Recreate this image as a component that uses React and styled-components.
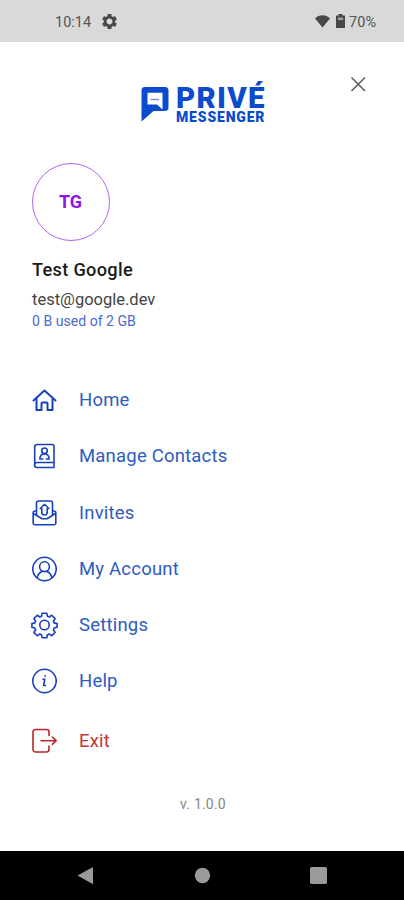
import React from 'react';
import styled, { createGlobalStyle } from 'styled-components';

const GlobalStyle = createGlobalStyle`
  * {
    box-sizing: border-box;
  }
  body {
    margin: 0;
    background: #fff;
    font-family: Roboto, 'Liberation Sans', sans-serif;
  }
`;

const Screen = styled.div`
  width: 404px;
  height: 900px;
  display: flex;
  flex-direction: column;
  background: #fff;
  overflow: hidden;
`;

const StatusBar = styled.header`
  height: 42px;
  flex-shrink: 0;
  display: flex;
  justify-content: space-between;
  align-items: center;
  padding: 2px 28px 0 55px;
  background: #d9d9d9;
  color: #555;
  font-size: 14.5px;
`;

const StatusGroup = styled.div`
  display: flex;
  align-items: center;
  gap: ${({ $gap }) => $gap}px;
  svg {
    display: block;
    margin-top: -2px;
  }
`;

const Drawer = styled.main`
  flex: 1;
  display: flex;
  flex-direction: column;
  padding: 0 32px;
`;

const TopRow = styled.div`
  display: grid;
  grid-template-columns: 1fr auto 1fr;
  height: 121px;
  padding-top: 33px;
`;

const Logo = styled.svg`
  grid-column: 2;
  display: block;
  overflow: visible;
  text {
    font-family: Roboto, sans-serif;
    font-weight: 900;
    fill: #0c4bcb;
  }
`;

const CloseButton = styled.button`
  justify-self: end;
  width: 20px;
  height: 20px;
  margin: -1px 4px 0 0;
  padding: 0;
  border: 0;
  background: none;
  svg {
    display: block;
  }
`;

const Avatar = styled.div`
  width: 78px;
  height: 78px;
  display: flex;
  align-items: center;
  justify-content: center;
  padding: 0 1px 1px 0;
  border: 1px solid #b264f2;
  border-radius: 50%;
  color: #9213ea;
  font-size: 18px;
  font-weight: 700;
`;

const Name = styled.h1`
  margin: 17px 0 0;
  color: #1b1b1b;
  font-size: 18.2px;
  line-height: 24px;
  font-weight: 500;
  letter-spacing: 0.3px;
`;

const Email = styled.div`
  margin-top: 7px;
  color: #444;
  font-size: 16.5px;
  line-height: 22px;
`;

const Usage = styled.div`
  color: #4a6bd0;
  font-size: 14.1px;
  line-height: 21px;
`;

const Menu = styled.nav`
  display: flex;
  flex-direction: column;
  margin-top: 40px;
`;

const MenuItem = styled.a`
  height: 56.25px;
  display: flex;
  align-items: center;
  gap: 21px;
  margin-top: ${({ $last }) => ($last ? '3px' : '0')};
  color: ${({ $danger }) => ($danger ? '#c0353a' : '#2e5bc4')};
  font-size: 18.5px;
  letter-spacing: 0.2px;
  svg {
    display: block;
    flex-shrink: 0;
    overflow: visible;
    fill: none;
    stroke: ${({ $danger }) => ($danger ? '#bd2329' : '#1740bd')};
    stroke-width: 1.6;
    stroke-linejoin: round;
    stroke-linecap: round;
  }
`;

const Version = styled.footer`
  margin-top: 25px;
  text-align: center;
  color: #858585;
  font-size: 14px;
  line-height: 20px;
  letter-spacing: 0.2px;
  padding-left: 2px;
`;

const NavBar = styled.div`
  height: 49px;
  flex-shrink: 0;
  background: #000;
  svg {
    display: block;
    fill: #9a9a9a;
  }
`;

const icons = {
  home: (
    <>
      <path d="M1.5 13.5 12.5 3.5l11 10" strokeWidth="2" />
      <path d="M4.5 12v11h5v-6.5a1 1 0 0 1 1-1h4a1 1 0 0 1 1 1V23h5V12" strokeWidth="2" />
    </>
  ),
  contacts: (
    <>
      <path d="M22 19.5H5a2.3 2.3 0 0 0 0 5h17v-21a2 2 0 0 0-2-2H5a2.3 2.3 0 0 0-2.3 2.3v18.4" />
      <circle cx="12.5" cy="7.8" r="2.8" />
      <path d="M7.8 16c.2-3.2 1.800-5 4.700-5s4.500 1.800 4.700 5h-3M7.800 16h3" />
    </>
  ),
  invites: (
    <>
      <path d="M4.5 15V3a2 2 0 0 1 2-2h12a2 2 0 0 1 2 2v12" />
      <path d="M4.5 11H3a1.8 1.8 0 0 0-1.8 1.8V23A1.8 1.8 0 0 0 3 24.8h19a1.8 1.8 0 0 0 1.8-1.8V12.8A1.8 1.8 0 0 0 22 11h-1.5" />
      <path d="m1.5 13.5 8.5 5.3h5l8.5-5.3" />
      <path d="m12.5 4.3 4.3 4.2h-1.6v4.8l-1.2 1.5h-3l-1.2-1.5V8.5H8.2Z" />
    </>
  ),
  account: (
    <>
      <circle cx="12.5" cy="13" r="11.7" />
      <circle cx="12.5" cy="10.7" r="4.9" />
      <path d="M5.2 21.800c.5-3.500 2.500-5.500 4.800-6.400M19.800 21.800c-.5-3.500-2.500-5.500-4.800-6.400" />
    </>
  ),
  settings: (
    <>
      <path d="M10.200 1.200h4.600l.7 3.100 1.600.7 2.700-1.700 3.300 3.300-1.700 2.700.7 1.600 3 .7v3.700l-3 .8-.7 1.600 1.700 2.700-3.300 3.300-2.700-1.700-1.600.7-.7 3.100h-4.600l-.7-3.100-1.600-.7-2.700 1.700-3.300-3.300 1.700-2.700-.7-1.600-3-.8v-3.700l3-.7.7-1.600-1.700-2.700 3.300-3.300L7.900 5l1.600-.7Z" />
      <circle cx="12.5" cy="13" r="4.7" />
    </>
  ),
  help: (
    <>
      <circle cx="12.5" cy="13" r="11.7" />
      <path d="M11 11.200h1.800l-1.200 6.300h1.900M13.100 7.800v.4" />
    </>
  ),
  exit: (
    <>
      <path d="M17 7.500V4a2.500 2.500 0 0 0-2.500-2.500h-11A2.500 2.500 0 0 0 1 4v17.500A2.500 2.500 0 0 0 3.500 24h11a2.500 2.500 0 0 0 2.500-2.500V18" />
      <path d="M9 12.700h15M20.300 9l3.900 3.700-3.900 3.700" />
    </>
  ),
};

const items = [
  { icon: 'home', label: 'Home' },
  { icon: 'contacts', label: 'Manage Contacts' },
  { icon: 'invites', label: 'Invites' },
  { icon: 'account', label: 'My Account' },
  { icon: 'settings', label: 'Settings' },
  { icon: 'help', label: 'Help' },
  { icon: 'exit', label: 'Exit', danger: true },
];

const App = () => (
  <>
    <GlobalStyle />
    <Screen>
      <StatusBar>
        <StatusGroup $gap={11}>
          <span>10:14</span>
          <svg width="15" height="15" viewBox="2 2 20 20" fill="#484848">
            <path d="M19.430 12.980c.04-.32.07-.64.07-.98s-.03-.66-.07-.98l2.110-1.650c.19-.15.24-.42.12-.64l-2-3.460c-.12-.22-.39-.3-.61-.22l-2.490 1c-.52-.4-1.080-.73-1.690-.98l-.38-2.650C14.460 2.180 14.250 2 14 2h-4c-.25 0-.46.18-.49.42l-.38 2.650c-.61.25-1.170.59-1.690.98l-2.490-1c-.23-.09-.49 0-.61.22l-2 3.460c-.13.22-.07.49.12.64l2.110 1.650c-.04.32-.07.65-.07.98s.03.66.07.98l-2.110 1.650c-.19.15-.24.42-.12.64l2 3.460c.12.22.39.3.61.22l2.490-1c.52.4 1.080.73 1.690.98l.38 2.650c.03.24.24.42.49.42h4c.25 0 .46-.18.49-.42l.38-2.650c.61-.25 1.170-.59 1.690-.98l2.490 1c.23.09.49 0 .61-.22l2-3.460c.12-.22.07-.49-.12-.64l-2.110-1.650zM12 16c-2.210 0-4-1.790-4-4s1.790-4 4-4 4 1.790 4 4-1.790 4-4 4z" />
          </svg>
        </StatusGroup>
        <StatusGroup $gap={6}>
          <svg width="15" height="13" viewBox="0 0 15 13" fill="#484848">
            <path d="M0 3.500C4-.8 11-.8 15 3.500L7.500 12.500Z" />
          </svg>
          <StatusGroup $gap={4}>
            <svg width="9" height="14" viewBox="0 0 9 14">
              <path d="M2.500 0h4v1.500H9V14H0V1.500h2.500Z" fill="#484848" />
              <path d="M2 3.500h5V6H2Z" fill="#a3a3a3" />
            </svg>
            <span>70%</span>
          </StatusGroup>
        </StatusGroup>
      </StatusBar>

      <Drawer>
        <TopRow>
          <Logo width="126" height="54" viewBox="139 75 126 54">
            <path
              fill="#0c4bcb"
              fillRule="evenodd"
              d="M144.500 87H165q3.500 0 3.500 3.500V107.500q0 3.500-4 3.500h-11L141.500 121.500V90.500Q141.500 87 144.500 87ZM147.500 92.800v11.700h9.500l5.500 5V92.800Z"
            />
            <path d="M150.500 99.500h8.500" stroke="#5f8ade" strokeWidth="1.300" />
            <text x="176" y="108" fontSize="29.500" textLength="88.500">
              PRIVÉ
            </text>
            <text x="176" y="121.700" fontSize="14" textLength="88.500">
              MESSENGER
            </text>
          </Logo>
          <CloseButton aria-label="Close">
            <svg width="20" height="20" viewBox="0 0 20 20" stroke="#5e5e5e" strokeWidth="1.600">
              <path d="m3.500 3.500 13.500 13.500M17 3.500 3.500 17" />
            </svg>
          </CloseButton>
        </TopRow>

        <Avatar>TG</Avatar>
        <Name>Test Google</Name>
        <Email>test@google.dev</Email>
        <Usage>0 B used of 2 GB</Usage>

        <Menu>
          {items.map((item) => (
            <MenuItem key={item.label} $danger={item.danger} $last={item.danger}>
              <svg width="26" height="26" viewBox="0 0 26 26">
                {icons[item.icon]}
              </svg>
              <span>{item.label}</span>
            </MenuItem>
          ))}
        </Menu>

        <Version>v. 1.0.0</Version>
      </Drawer>

      <NavBar>
        <svg width="404" height="49" viewBox="0 0 404 49">
          <path d="M77.500 24.500 93 16v17.300Z" />
          <circle cx="202.500" cy="24.500" r="7.700" />
          <rect x="310" y="16" width="17" height="17" rx="1.800" />
        </svg>
      </NavBar>
    </Screen>
  </>
);

export default App;
